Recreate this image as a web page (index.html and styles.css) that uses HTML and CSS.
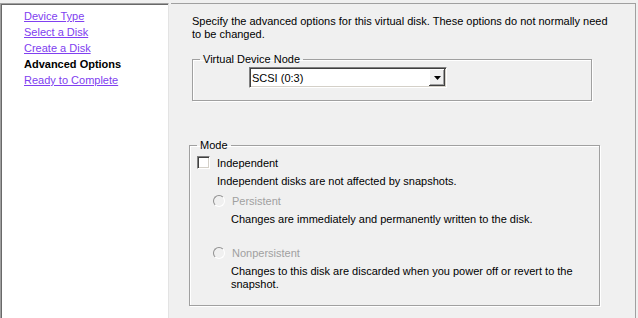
FILE: index.html
```html
<!DOCTYPE html>
<html lang="en">

<head>
    <meta charset="UTF-8" />
    <title>Add Hardware Wizard - Advanced Options</title>
    <link rel="stylesheet" href="styles.css">
</head>

<body>
    <div class="wizard">
        <aside class="steps">
            <ul>
                <li><a href="">Device Type</a></li>
                <li><a href="">Select a Disk</a></li>
                <li><a href="">Create a Disk</a></li>
                <li class="current">Advanced Options</li>
                <li><a href="">Ready to Complete</a></li>
            </ul>
        </aside>

        <main class="page">
            <p class="intro">Specify the advanced options for this virtual disk. These options do not normally need to be changed.</p>

            <fieldset class="group group-node">
                <legend>Virtual Device Node</legend>
                <div class="combo">
                    <span class="combo-value">SCSI (0:3)</span>
                    <span class="combo-button">
                        <svg width="7" height="4" viewBox="0 0 7 4"><path d="M0 0h7L3.5 4z" fill="#000" /></svg>
                    </span>
                </div>
            </fieldset>

            <fieldset class="group group-mode">
                <legend>Mode</legend>
                <label class="check-row">
                    <span class="checkbox"></span>
                    <span>Independent</span>
                </label>
                <p class="hint">Independent disks are not affected by snapshots.</p>

                <div class="radio-row">
                    <span class="radio"></span>
                    <span class="disabled">Persistent</span>
                </div>
                <p class="hint sub">Changes are immediately and permanently written to the disk.</p>

                <div class="radio-row">
                    <span class="radio"></span>
                    <span class="disabled">Nonpersistent</span>
                </div>
                <p class="hint sub">Changes to this disk are discarded when you power off or revert to the snapshot.</p>
            </fieldset>
        </main>
    </div>
</body>

</html>
```

FILE: styles.css
```css
:root {
    --bg-window: #f0f0f0;
    --line: #a0a0a0;
    --line-dark: #696969;
    --link: #8040f0;
    --text: #000;
    --text-disabled: #a0a0a0;
}

body {
    margin: 0;
    background-color: var(--bg-window);
    font-family: "Liberation Sans", Arial, sans-serif;
    font-size: 11px;
    color: var(--text);
}

.wizard {
    display: flex;
    height: 318px;
    padding: 3px 2px 0 0;
    box-sizing: border-box;
}

/* left step list */
.steps {
    width: 167px;
    background-color: #fff;
    border-top: 1px solid var(--line);
    border-left: 1px solid var(--line);
    border-right: 1px solid #e3e3e3;
    box-shadow: inset 1px 1px 0 var(--line-dark);

    ul {
        list-style: none;
        margin: 0;
        padding: 4px 0 0 23px;
    }

    li {
        line-height: 16px;
    }

    a {
        color: var(--link);
    }

    .current {
        font-weight: bold;
    }
}

/* right page */
.page {
    flex: 1;
    margin-left: 2px;
    border-top: 1px solid var(--line);
    border-right: 1px solid var(--line);
    padding: 0 0 0 18px;
}

.intro {
    width: 420px;
    margin: 11px 0 0 3px;
    line-height: 13px;
}

.group {
    box-sizing: border-box;
    margin: 0;
    padding: 0;
    border: 1px solid var(--line);
    box-shadow: 1px 1px 0 #fff, inset 1px 1px 0 #fff;

    legend {
        padding: 0 3px;
        margin-left: 7px;
        line-height: 13px;
    }
}

.group-node {
    width: 400px;
    height: 48px;
    margin: 12px 0 0 3px;
}

.combo {
    display: flex;
    align-items: center;
    width: 196px;
    height: 19px;
    margin: 1px 0 0 56px;
    background-color: #fff;
    border: 1px solid;
    border-color: #808080 #fff #fff #808080;
    box-shadow: inset 1px 1px 0 #404040, inset -1px -1px 0 #d4d0c8;
}

.combo-value {
    flex: 1;
    padding-left: 2px;
}

.combo-button {
    display: flex;
    align-items: center;
    justify-content: center;
    width: 16px;
    height: 17px;
    margin-right: 1px;
    background-color: #f0f0f0;
    box-shadow: inset -1px -1px 0 #404040, inset 1px 1px 0 #fff, inset -2px -2px 0 #a0a0a0;
}

.group-mode {
    width: 411px;
    height: 167px;
    margin: 38px 0 0 0;
}

.check-row {
    display: flex;
    align-items: center;
    gap: 7px;
    margin: 4px 0 0 7px;
    height: 13px;
}

.checkbox {
    width: 11px;
    height: 11px;
    background-color: #fff;
    border: 1px solid;
    border-color: #808080 #fff #fff #808080;
    box-shadow: inset 1px 1px 0 #404040, inset -1px -1px 0 #d4d0c8;
}

.hint {
    margin: 6px 0 0 27px;
    line-height: 13px;
}

.hint.sub {
    margin: 6px 0 0 41px;
    width: 360px;
}

.radio-row {
    display: flex;
    align-items: center;
    gap: 7px;
    margin: 6px 0 0 23px;
    height: 13px;
}

.group-mode .radio-row:nth-of-type(2) {
    margin-top: 20px;
}

.radio {
    width: 10px;
    height: 10px;
    border-radius: 50%;
    background-color: var(--bg-window);
    border: 1px solid;
    border-color: #909090 #fff #fff #909090;
}

.disabled {
    color: var(--text-disabled);
}
```
